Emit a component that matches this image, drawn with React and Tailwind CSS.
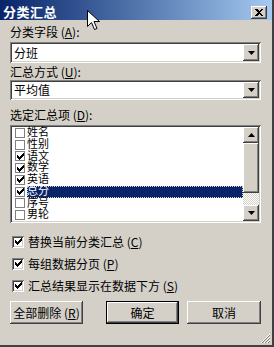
import React from "react"

const font = { fontFamily: '"Noto Sans CJK SC", "Liberation Sans", sans-serif' }
const listFont = { fontFamily: '"Liberation Sans", "Noto Sans CJK SC", sans-serif' }

const raised =
  "bg-[#d4d0c8] shadow-[inset_-1px_-1px_#404040,inset_1px_1px_#ffffff,inset_-2px_-2px_#808080,inset_2px_2px_#d4d0c8]"
const sunken =
  "shadow-[inset_1px_1px_#808080,inset_-1px_-1px_#ffffff,inset_2px_2px_#404040,inset_-2px_-2px_#d4d0c8]"

function Key({ k }) {
  return (
    <span>
      (<span className="underline underline-offset-1">{k}</span>)
    </span>
  )
}

function Check({ size = 8 }) {
  return (
    <svg width={size} height={size} viewBox="0 0 7 7" shapeRendering="crispEdges">
      <path d="M0 2h1v3H0zM1 3h1v3H1zM2 4h1v3H2zM3 3h1v3H3zM4 2h1v3H4zM5 1h1v3H5zM6 0h1v3H6z" fill="#000" />
    </svg>
  )
}

function Arrow({ up }) {
  return (
    <svg width="7" height="4" viewBox="0 0 7 4">
      {up ? <path d="M3.5 0L7 4H0z" fill="#000" /> : <path d="M0 0h7L3.5 4z" fill="#000" />}
    </svg>
  )
}

function Combo({ value, h }) {
  return (
    <div className={`flex items-center bg-white ${sunken} p-[2px]`} style={{ height: h }}>
      <span className="flex-1 pl-[2px] text-[12px] leading-[14px] text-black">{value}</span>
      <div className={`w-[16px] h-full flex items-center justify-center ${raised}`}>
        <Arrow />
      </div>
    </div>
  )
}

const items = [
  ["姓名", false],
  ["性别", false],
  ["语文", true],
  ["数学", true],
  ["英语", true],
  ["总分", true, true],
  ["序号", false],
  ["男轮", false],
]

function App() {
  return (
    <div
      className="relative w-[274px] h-[347px] bg-[#d4d0c8] border-r-2 border-b-2 border-r-[#404040] border-b-[#404040] flex flex-col text-black overflow-hidden"
      style={font}
    >
      {/* title bar */}
      <div className="h-[20px] flex items-end justify-between pb-[1px] pl-[3px] pr-[5px] bg-gradient-to-r from-[#0a246a] to-[#a6caf0]">
        <span className="text-white font-bold text-[13px] leading-[14px] tracking-[0.5px]">分类汇总</span>
        <div className={`w-[16px] h-[13px] flex items-center justify-center ${raised}`}>
          <svg width="8" height="7" viewBox="0 0 8 7" shapeRendering="crispEdges">
            <path d="M0 0h2l2 2 2-2h2L5 3.5 8 7H6L4 5 2 7H0l3-3.5z" fill="#000" />
          </svg>
        </div>
      </div>

      <div className="flex flex-col px-[10px] pr-[11px] text-[12px]">
        <div className="mt-[4px] h-[16px] leading-[16px]">
          分类字段 <Key k="A" />:
        </div>
        <div className="mt-[2px]">
          <Combo value="分班" h={21} />
        </div>
        <div className="mt-[1px] h-[16px] leading-[16px]">
          汇总方式 <Key k="U" />:
        </div>
        <div>
          <Combo value="平均值" h={20} />
        </div>

        <div className="mt-[7px] h-[16px] leading-[16px]">
          选定汇总项 <Key k="D" />:
        </div>
        <div className={`mt-[2px] h-[98px] bg-white ${sunken} p-[2px] flex`}>
          <div className="flex-1 flex flex-col pl-[3px]" style={listFont}>
            {items.map(([name, checked, sel]) => (
              <div key={name} className="h-[11.75px] flex items-center">
                <div className="w-[10px] h-[10px] border border-[#808080] bg-white flex items-center justify-center shrink-0">
                  {checked && <Check size={7} />}
                </div>
                <span
                  className={`ml-[2px] flex-1 h-full flex items-center text-[11px] leading-[11.75px] ${
                    sel ? "bg-[#0a246a] text-white outline-1 outline-dotted outline-[#d4d0c8] -outline-offset-1" : ""
                  }`}
                >
                  {name}
                </span>
              </div>
            ))}
          </div>
          <div className="w-[16px] flex flex-col">
            <div className={`h-[16px] flex items-center justify-center ${raised}`}>
              <Arrow up />
            </div>
            <div className={`h-[50px] ${raised}`} />
            <div className="flex-1 bg-[repeating-conic-gradient(#ffffff_0_25%,#d4d0c8_0_50%)] bg-[length:2px_2px]" />
            <div className={`h-[16px] flex items-center justify-center ${raised}`}>
              <Arrow />
            </div>
          </div>
        </div>

        <div className="mt-[12px] flex flex-col gap-[9px] pl-[2px]">
          {[
            ["替换当前分类汇总 ", "C"],
            ["每组数据分页 ", "P"],
            ["汇总结果显示在数据下方 ", "S"],
          ].map(([t, k]) => (
            <div key={k} className="flex items-center h-[13px]">
              <div className={`w-[12px] h-[12px] bg-white ${sunken} flex items-center justify-center`}>
                <Check size={7} />
              </div>
              <span className="ml-[4px] leading-[13px]">
                {t}
                <Key k={k} />
              </span>
            </div>
          ))}
        </div>

        <div className="mt-[9px] flex items-center">
          <button className={`w-[74px] h-[23px] text-[12px] ${raised}`}>
            全部删除 <Key k="R" />
          </button>
          <button className="ml-[23px] w-[74px] h-[23px] border border-black p-0">
            <div className={`w-full h-full flex items-center justify-center text-[12px] ${raised}`}>确定</div>
          </button>
          <button className={`ml-[8px] w-[75px] h-[23px] text-[12px] ${raised}`}>取消</button>
        </div>
      </div>

      {/* resize grip */}
      <svg className="absolute right-[1px] bottom-[1px]" width="11" height="11" viewBox="0 0 11 11">
        <path d="M10 1L1 10M10 4L4 10M10 7L7 10" stroke="#ffffff" strokeWidth="1" />
        <path d="M10 2L2 10M10 5L5 10M10 8L8 10" stroke="#808080" strokeWidth="1" />
      </svg>

      {/* mouse pointer */}
      <svg className="absolute left-[87px] top-[10px]" width="13" height="21" viewBox="0 0 13 21">
        <path d="M0.5 0.5V16.5L4.5 12.5L7.5 19.5L10 18.5L7 11.5H12.5Z" fill="#fff" stroke="#000" strokeWidth="1" />
      </svg>
    </div>
  )
}

export default App
